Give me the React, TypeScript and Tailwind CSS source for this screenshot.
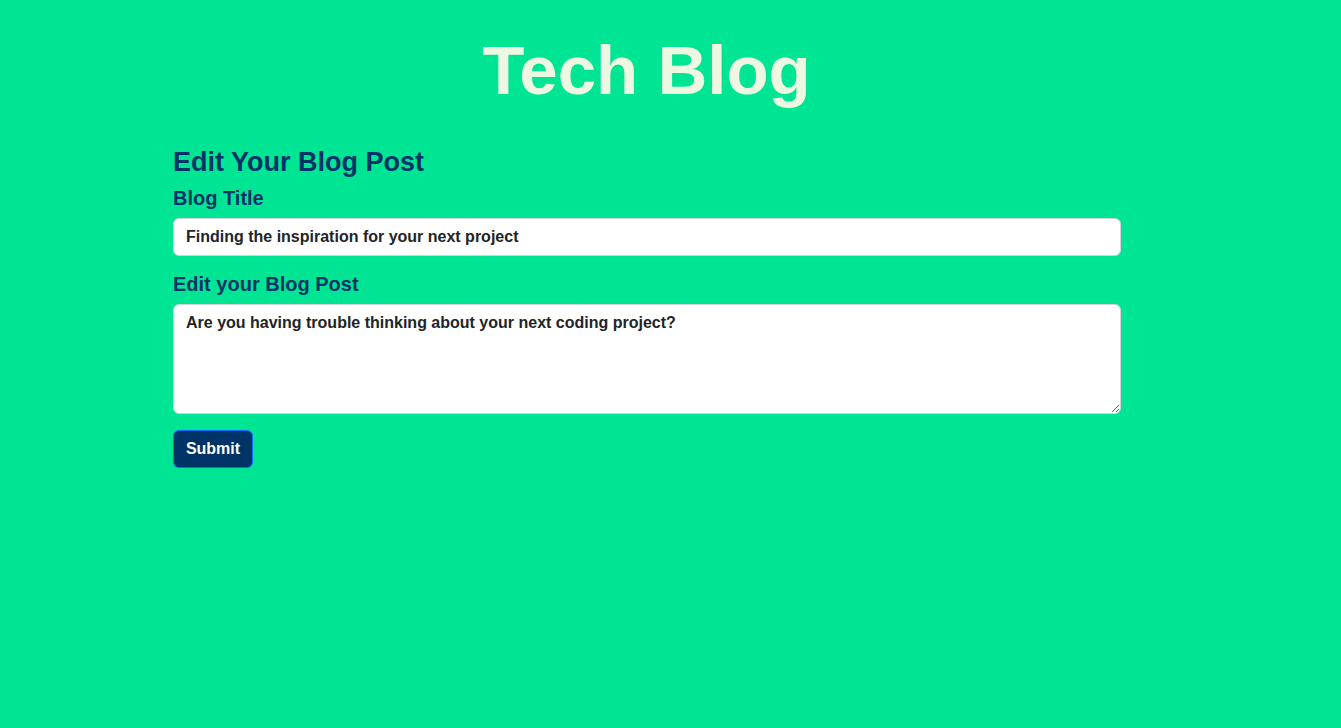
const font = { fontFamily: '"Liberation Sans", Arial, sans-serif' };

export default function App() {
  return (
    <div className="min-h-screen bg-[#00e594] pr-12" style={font}>
      <header className="flex justify-center pt-[36px]">
        <h1 className="text-[69px] leading-none font-bold text-[#eef7e1]">Tech Blog</h1>
      </header>

      <form
        className="ml-[173px] w-[948px] mt-[41px] flex flex-col"
        onSubmit={(e) => e.preventDefault()}
      >
        <h2 className="text-[27px] leading-[32px] font-bold text-[#003366]">Edit Your Blog Post</h2>

        <label htmlFor="title" className="mt-2 text-[20px] leading-[24px] font-bold text-[#003366]">
          Blog Title
        </label>
        <input
          id="title"
          type="text"
          defaultValue="Finding the inspiration for your next project"
          className="mt-2 h-[38px] w-full rounded-[6px] border border-[#ced4da] bg-white px-3 text-[16px] font-bold text-[#212529] outline-none"
        />

        <label htmlFor="body" className="mt-4 text-[20px] leading-[24px] font-bold text-[#003366]">
          Edit your Blog Post
        </label>
        <textarea
          id="body"
          defaultValue="Are you having trouble thinking about your next coding project?"
          className="mt-2 h-[110px] w-full rounded-[6px] border border-[#ced4da] bg-white px-3 py-[6px] text-[16px] leading-[24px] font-bold text-[#212529] outline-none"
        />

        <div className="mt-4">
          <button
            type="submit"
            className="h-[38px] w-[80px] rounded-[6px] border border-[#0d6efd] bg-[#003366] text-[16px] font-bold text-white"
          >
            Submit
          </button>
        </div>
      </form>
    </div>
  );
}
